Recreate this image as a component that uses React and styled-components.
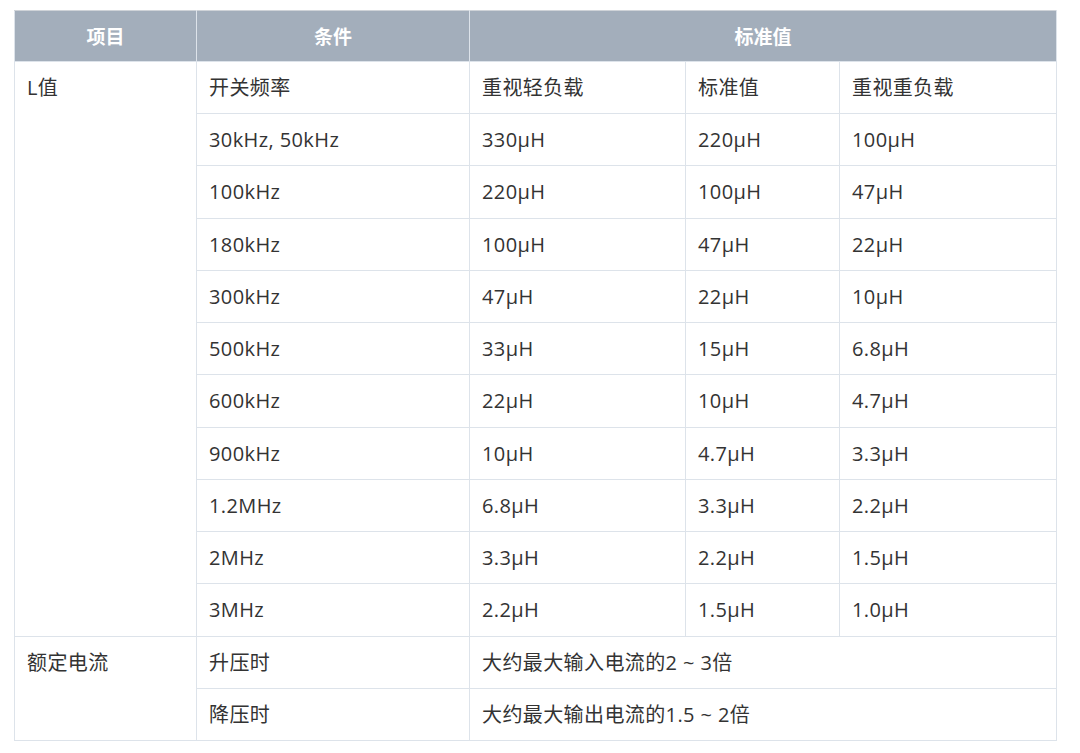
import React from "react";
import styled, { createGlobalStyle } from "styled-components";

const Global = createGlobalStyle`
  html, body { margin: 0; padding: 0; background: #ffffff; }
  body { font-family: "Open Sans", "Noto Sans CJK SC", sans-serif; }
`;

const Page = styled.div`
  padding: 10px 0 0 14px;
`;

const Table = styled.table`
  width: 1042px;
  table-layout: fixed;
  border-collapse: collapse;
  border: 1px solid #dde3ea;
  font-size: 20px;
  letter-spacing: 0.4px;
  color: #333333;
`;

const HeadCell = styled.th`
  background: #a3aebb;
  color: #ffffff;
  font-weight: 600;
  font-size: 19px;
  letter-spacing: 0;
  height: 50px;
  padding: 0 12px;
  text-align: center;
  vertical-align: middle;
  border: 1px solid #dde3ea;
  border-top-color: #cfd3d8;
`;

const Cell = styled.td`
  padding: 12px 12px;
  line-height: 27.23px;
  text-align: left;
  vertical-align: top;
  border: 1px solid #dde3ea;
  white-space: nowrap;
`;

const widths = [182, 273, 216, 154, 217];

const lRows = [
  ["30kHz, 50kHz", "330µH", "220µH", "100µH"],
  ["100kHz", "220µH", "100µH", "47µH"],
  ["180kHz", "100µH", "47µH", "22µH"],
  ["300kHz", "47µH", "22µH", "10µH"],
  ["500kHz", "33µH", "15µH", "6.8µH"],
  ["600kHz", "22µH", "10µH", "4.7µH"],
  ["900kHz", "10µH", "4.7µH", "3.3µH"],
  ["1.2MHz", "6.8µH", "3.3µH", "2.2µH"],
  ["2MHz", "3.3µH", "2.2µH", "1.5µH"],
  ["3MHz", "2.2µH", "1.5µH", "1.0µH"],
];

export default function App() {
  return (
    <Page>
      <Global />
      <Table>
        <colgroup>
          {widths.map((w, i) => (
            <col key={i} style={{ width: w }} />
          ))}
        </colgroup>
        <thead>
          <tr>
            <HeadCell>项目</HeadCell>
            <HeadCell>条件</HeadCell>
            <HeadCell colSpan={3}>标准值</HeadCell>
          </tr>
        </thead>
        <tbody>
          <tr>
            <Cell rowSpan={11}>L值</Cell>
            <Cell>开关频率</Cell>
            <Cell>重视轻负载</Cell>
            <Cell>标准值</Cell>
            <Cell>重视重负载</Cell>
          </tr>
          {lRows.map((r) => (
            <tr key={r[0]}>
              {r.map((v, i) => (
                <Cell key={i}>{v}</Cell>
              ))}
            </tr>
          ))}
          <tr>
            <Cell rowSpan={2}>额定电流</Cell>
            <Cell>升压时</Cell>
            <Cell colSpan={3}>大约最大输入电流的2 ~ 3倍</Cell>
          </tr>
          <tr>
            <Cell>降压时</Cell>
            <Cell colSpan={3}>大约最大输出电流的1.5 ~ 2倍</Cell>
          </tr>
        </tbody>
      </Table>
    </Page>
  );
}
